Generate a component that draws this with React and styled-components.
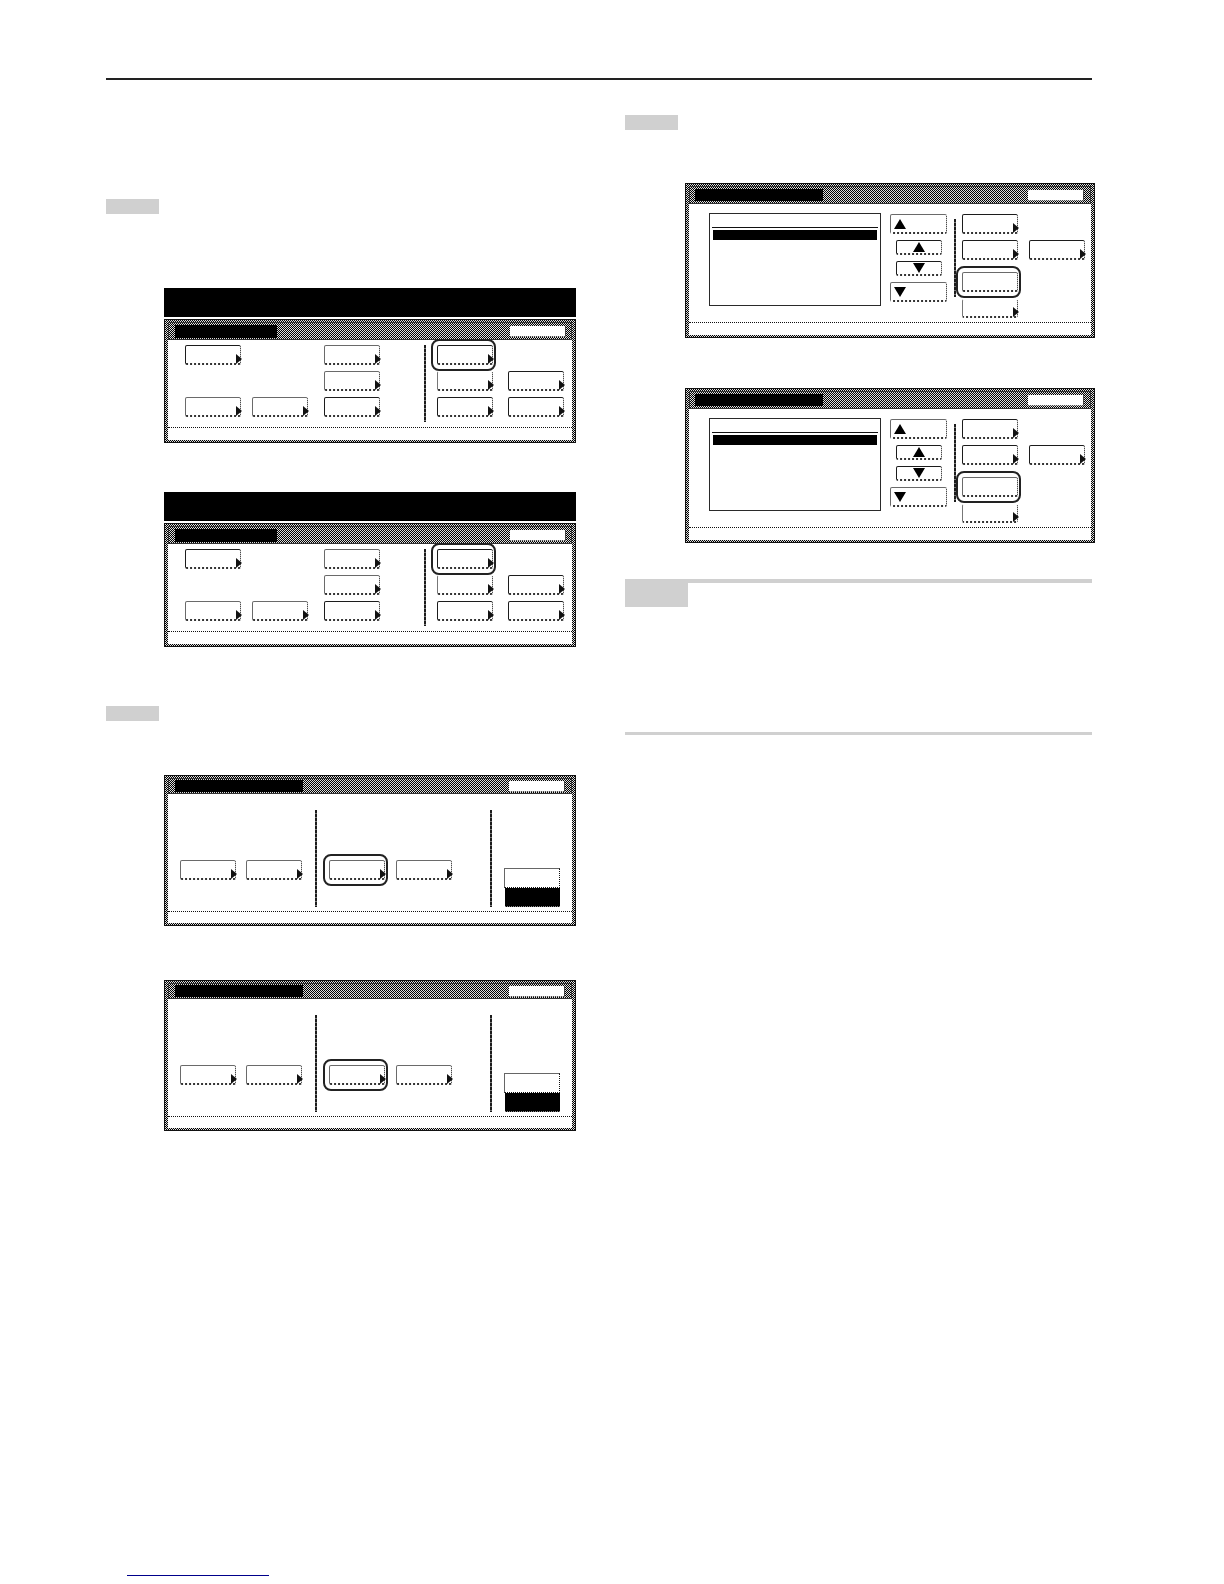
import React from "react";
import styled, { createGlobalStyle, css } from "styled-components";

const Global = createGlobalStyle`
  html, body { margin: 0; padding: 0; background: #fff; font-family: "Liberation Sans", Arial, sans-serif; }
`;

const dither = css`
  background-color: #ddd;
  background-image: repeating-conic-gradient(#000 0 25%, #ddd 0 50%);
  background-size: 2px 2px;
`;

const dashedRule = css`
  width: 2px;
  background: repeating-linear-gradient(180deg, #1c1c1c 0 3px, #777 3px 4px);
`;

const Page = styled.div`
  width: 1224px;
  min-height: 1584px;
  box-sizing: border-box;
  padding: 78px 132px 8px 106px;
  display: flex;
  flex-direction: column;
`;
const TopRule = styled.div`
  height: 2px;
  background: #222;
  flex: none;
`;
const Columns = styled.div`
  display: grid;
  grid-template-columns: 470px 467px;
  column-gap: 49px;
`;
const Column = styled.section`
  display: flex;
  flex-direction: column;
  align-items: flex-start;
`;
const StepBadge = styled.div`
  width: 53px;
  height: 15px;
  background: #d0d0d0;
  margin-top: ${(p) => p.$top}px;
`;
const Figure = styled.div`
  margin-top: ${(p) => p.$top}px;
  margin-left: ${(p) => p.$indent}px;
`;
const BlackHeader = styled.div`
  width: 412px;
  height: 29px;
  background: #000;
  margin-bottom: 2px;
`;
const Panel = styled.div`
  box-sizing: border-box;
  width: ${(p) => p.$w}px;
  height: ${(p) => p.$h}px;
  border: 1px solid #111;
  padding: 2px 3px;
  ${dither};
  display: flex;
  flex-direction: column;
`;
const TitleBar = styled.div`
  ${dither};
  flex: none;
  height: ${(p) => p.$h}px;
  display: flex;
  align-items: center;
  justify-content: space-between;
  padding: 0 ${(p) => p.$padR}px 0 ${(p) => p.$padL}px;
  outline: 1px solid #333;
  outline-offset: -1px;
`;
const TitleBlock = styled.div`
  width: ${(p) => p.$w}px;
  height: ${(p) => p.$h}px;
  background: #000;
`;
const CloseKey = styled.div`
  width: 56px;
  height: 11px;
  background: #fff;
  border-bottom: 1px dotted #222;
  border-right: 1px solid #444;
  box-sizing: border-box;
  border-radius: 1px;
`;
const Screen = styled.div`
  flex: 1;
  background: #fff;
  display: flex;
  flex-direction: column;
`;
const FooterStrip = styled.div`
  flex: 1;
  border-top: 1px dotted #111;
`;
const GridBody = styled.div`
  flex: none;
  box-sizing: border-box;
  height: ${(p) => p.$h}px;
  display: grid;
  justify-content: start;
  padding: ${(p) => p.$top}px 0 0 ${(p) => p.$left}px;
  grid-template-columns: ${(p) => p.$cols};
  grid-template-rows: ${(p) => p.$rows};
`;
const Key = styled.div`
  position: relative;
  box-sizing: border-box;
  width: ${(p) => p.$w || 56}px;
  height: ${(p) => p.$h || 20}px;
  flex: none;
  background: #fff;
  border-top: 1px solid ${(p) => (p.$noTop ? "#fff" : p.$soft ? "#6a6a6a" : "#1c1c1c")};
  border-left: 1px solid ${(p) => (p.$noTop ? "#777" : p.$soft ? "#6a6a6a" : "#1c1c1c")};
  border-right: 1px dotted #111;
  border-bottom: 2px dotted #333;
  border-radius: 2px;
  display: flex;
  align-items: center;
  justify-content: ${(p) => p.$glyph || "center"};
  padding-left: ${(p) => (p.$glyph ? 3 : 0)}px;
  grid-column: ${(p) => p.$col};
  grid-row: ${(p) => p.$row};
  margin-top: ${(p) => p.$mt || 0}px;
  ${(p) =>
    p.$arrow &&
    css`
      &::after {
        content: "";
        position: absolute;
        right: -2px;
        bottom: -1px;
        width: 6px;
        height: 10px;
        background: #111;
        clip-path: polygon(0 0, 100% 50%, 0 100%);
      }
    `}
  ${(p) =>
    p.$ring &&
    css`
      &::before {
        content: "";
        position: absolute;
        left: -7px;
        right: -4px;
        top: -7px;
        bottom: -8px;
        border: 2px solid #222;
        border-radius: 8px;
        z-index: 1;
      }
    `}
`;
const Divider = styled.div`
  ${dashedRule};
  grid-column: ${(p) => p.$col};
  grid-row: 1 / -1;
`;
const ModeStack = styled.div`
  grid-column: 13;
  grid-row: 2 / 4;
  align-self: end;
  box-sizing: border-box;
  width: 56px;
  height: 39px;
  display: flex;
  flex-direction: column;
`;
const ModeOff = styled.div`
  height: 20px;
  box-sizing: border-box;
  border: 1px solid #666;
  border-bottom: 1px dotted #111;
  border-right: 1px dotted #111;
`;
const ModeOn = styled.div`
  flex: 1;
  margin-left: 1px;
  background: #000;
  border-bottom: 1px dotted #888;
`;
const FlexBody = styled.div`
  flex: none;
  height: 118px;
  box-sizing: border-box;
  display: flex;
  align-items: flex-start;
  padding: 10px 0 0 20px;
`;
const ListBox = styled.div`
  box-sizing: border-box;
  width: 172px;
  height: 93px;
  margin-top: -1px;
  border: 1px solid #2a2a2a;
  padding: 0 2px;
`;
const ListHead = styled.div`
  height: 13px;
  border-bottom: 1px solid #111;
`;
const ListRow = styled.div`
  height: 10px;
  margin: 2px 1px 0;
  background: #000;
`;
const ScrollColumn = styled.div`
  width: 57px;
  margin-left: 9px;
  display: flex;
  flex-direction: column;
  align-items: center;
  gap: 6px;
`;
const KeyRail = styled.div`
  ${dashedRule};
  height: 78px;
  margin: 5px 6px 0 7px;
`;
const KeyColumn = styled.div`
  display: flex;
  flex-direction: column;
`;
const ExtraColumn = styled.div`
  margin: 26px 0 0 11px;
`;
const Triangle = styled.svg`
  display: block;
  flex: none;
`;
const NoteBox = styled.aside`
  align-self: stretch;
  box-sizing: border-box;
  height: 156px;
  margin-top: 36px;
  border-top: 4px solid #d0d0d0;
  border-bottom: 3px solid #d0d0d0;
`;
const NoteBadge = styled.div`
  width: 63px;
  height: 24px;
  background: #d0d0d0;
`;
const PageLink = styled.div`
  margin: auto 0 0 21px;
  width: 142px;
  height: 1px;
  background: #00008b;
`;

const Up = ({ w = 12, h = 10 }) => (
  <Triangle width={w} height={h} viewBox="0 0 11 9" preserveAspectRatio="none"><polygon points="5.5,0 11,9 0,9" fill="#000" /></Triangle>
);
const Down = ({ w = 12, h = 10 }) => (
  <Triangle width={w} height={h} viewBox="0 0 11 9" preserveAspectRatio="none"><polygon points="0,0 11,0 5.5,9" fill="#000" /></Triangle>
);

const keysA = [
  { $col: 1, $row: 1 },
  { $col: 5, $row: 1, $soft: true },
  { $col: 5, $row: 3, $soft: true },
  { $col: 1, $row: 5, $soft: true },
  { $col: 3, $row: 5, $soft: true },
  { $col: 5, $row: 5 },
  { $col: 9, $row: 1, $ring: true },
  { $col: 9, $row: 3, $noTop: true },
  { $col: 11, $row: 3 },
  { $col: 9, $row: 5 },
  { $col: 11, $row: 5 },
];

function MainPanel() {
  return (
    <>
      <BlackHeader />
      <Panel $w={412} $h={124}>
        <TitleBar $h={18} $padL={7} $padR={6}>
          <TitleBlock $w={102} $h={13} />
          <CloseKey />
        </TitleBar>
        <Screen>
          <GridBody
            $h={87}
            $top={5}
            $left={17}
            $cols="56px 11px 56px 16px 56px 44px 2px 11px 56px 15px 57px"
            $rows="20px 6px 20px 6px 20px 5px"
          >
            <Divider $col={7} />
            {keysA.map((k, i) => (
              <Key key={i} {...k} $arrow />
            ))}
          </GridBody>
          <FooterStrip />
        </Screen>
      </Panel>
    </>
  );
}

function ModePanel() {
  return (
    <Panel $w={412} $h={151}>
      <TitleBar $h={16} $padL={7} $padR={7}>
        <TitleBlock $w={128} $h={12} />
        <CloseKey />
      </TitleBar>
      <Screen>
        <GridBody
          $h={117}
          $top={16}
          $left={12}
          $cols="56px 10px 57px 12px 2px 12px 56px 11px 56px 38px 2px 12px 56px"
          $rows="50px 20px 27px"
        >
          <Divider $col={5} />
          <Divider $col={11} />
          <Key $col={1} $row={2} $arrow $soft />
          <Key $col={3} $row={2} $arrow $soft />
          <Key $col={7} $row={2} $arrow $ring $soft />
          <Key $col={9} $row={2} $arrow $soft />
          <ModeStack>
            <ModeOff />
            <ModeOn />
          </ModeStack>
        </GridBody>
        <FooterStrip />
      </Screen>
    </Panel>
  );
}

function ListPanel() {
  return (
    <Panel $w={410} $h={155}>
      <TitleBar $h={18} $padL={6} $padR={7}>
        <TitleBlock $w={128} $h={12} />
        <CloseKey />
      </TitleBar>
      <Screen>
        <FlexBody>
          <ListBox>
            <ListHead />
            <ListRow />
          </ListBox>
          <ScrollColumn>
            <Key $w={57} $glyph="flex-start" $soft><Up /></Key>
            <Key $w={46} $h={15}><Up /></Key>
            <Key $w={46} $h={15}><Down /></Key>
            <Key $w={57} $glyph="flex-start" $soft><Down /></Key>
          </ScrollColumn>
          <KeyRail />
          <KeyColumn>
            <Key $arrow />
            <Key $arrow $mt={6} />
            <Key $ring $soft $mt={12} />
            <Key $arrow $noTop $mt={7} $h={19} />
          </KeyColumn>
          <ExtraColumn>
            <Key $arrow />
          </ExtraColumn>
        </FlexBody>
        <FooterStrip />
      </Screen>
    </Panel>
  );
}

export default function App() {
  return (
    <>
      <Global />
      <Page>
        <TopRule />
        <Columns>
          <Column>
            <StepBadge $top={119} />
            <Figure $top={74} $indent={58}><MainPanel /></Figure>
            <Figure $top={49} $indent={58}><MainPanel /></Figure>
            <StepBadge $top={59} />
            <Figure $top={54} $indent={58}><ModePanel /></Figure>
            <Figure $top={54} $indent={58}><ModePanel /></Figure>
          </Column>
          <Column>
            <StepBadge $top={35} />
            <Figure $top={53} $indent={60}><ListPanel /></Figure>
            <Figure $top={50} $indent={60}><ListPanel /></Figure>
            <NoteBox><NoteBadge /></NoteBox>
          </Column>
        </Columns>
        <PageLink />
      </Page>
    </>
  );
}
